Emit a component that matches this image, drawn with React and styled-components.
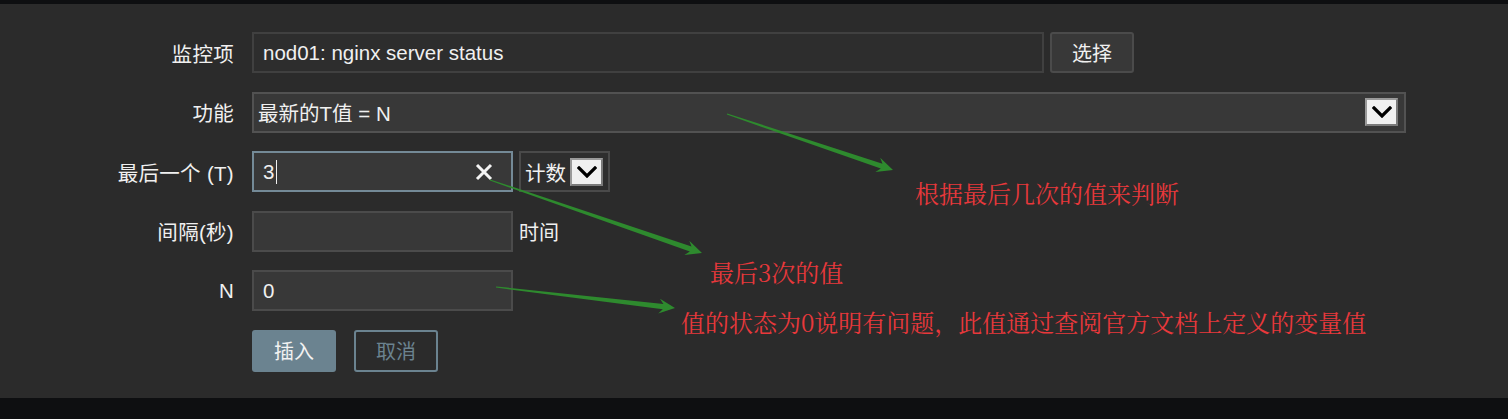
import React from "react";
import styled, { createGlobalStyle } from "styled-components";

const GlobalStyle = createGlobalStyle`
  html, body {
    margin: 0;
    padding: 0;
    background: #0e0f11;
  }
  body {
    font-family: "Liberation Sans", "Noto Sans CJK SC", sans-serif;
  }
`;

const ui = {
  panel: "#2b2b2b",
  field: "#383838",
  border: "#4b4b4b",
  text: "#f0f0f0",
  accent: "#6b8390",
  focus: "#748a97",
  note: "#e8383b",
  arrow: "#2e8a2e",
};

// simple annotation arrows: tail -> tip, tapering shaft
const arrowPoints = ([x1, y1], [x2, y2]) => {
  const dx = x2 - x1;
  const dy = y2 - y1;
  const len = Math.hypot(dx, dy);
  const ux = dx / len;
  const uy = dy / len;
  const nx = -uy;
  const ny = ux;
  const neck = 12;
  const back = 16;
  const p = (d, w) => `${(x2 - ux * d + nx * w).toFixed(1)},${(y2 - uy * d + ny * w).toFixed(1)}`;
  const tail = (w) => `${(x1 + nx * w).toFixed(1)},${(y1 + ny * w).toFixed(1)}`;
  return [tail(0.6), p(neck, 2.6), p(back, 7.5), `${x2},${y2}`, p(back, -7.5), p(neck, -2.6), tail(-0.6)].join(" ");
};

const arrows = [
  [[727, 114], [893, 170]],
  [[490, 180], [702, 253]],
  [[496, 287], [675, 308]],
];

const notes = [
  { x: 915, y: 181, text: "根据最后几次的值来判断" },
  { x: 710, y: 260, text: "最后3次的值" },
  { x: 681, y: 310, text: "值的状态为0说明有问题，此值通过查阅官方文档上定义的变量值" },
];

const App = () => {
  return (
    <>
      <GlobalStyle />
      <Page>
        <Panel>
          <Form>
            <Label>监控项</Label>
            <Line>
              <Field width="792px" readOnly>nod01: nginx server status</Field>
              <Button>选择</Button>
            </Line>

            <Label>功能</Label>
            <Line>
              <Select width="1154px">
                <SelectText>最新的T值 = N</SelectText>
                <DropButton><Chevron /></DropButton>
              </Select>
            </Line>

            <Label>最后一个 (T)</Label>
            <Line>
              <Field width="261px" focused>
                3<Caret />
                <Clear>
                  <svg width="18" height="18" viewBox="0 0 18 18">
                    <path d="M2 2 L16 16 M16 2 L2 16" stroke="#f4f4f4" strokeWidth="3" fill="none" />
                  </svg>
                </Clear>
              </Field>
              <SmallSelect>
                <SelectText>计数</SelectText>
                <DropButton><Chevron /></DropButton>
              </SmallSelect>
            </Line>

            <Label>间隔(秒)</Label>
            <Line>
              <Field width="261px" />
              <Suffix>时间</Suffix>
            </Line>

            <Label>N</Label>
            <Line>
              <Field width="261px">0</Field>
            </Line>

            <span />
            <Actions>
              <Primary>插入</Primary>
              <Secondary>取消</Secondary>
            </Actions>
          </Form>
        </Panel>

        <Overlay width="1508" height="419" viewBox="0 0 1508 419">
          {arrows.map(([a, b], i) => (
            <polygon key={i} points={arrowPoints(a, b)} fill={ui.arrow} />
          ))}
        </Overlay>
        {notes.map((n) => (
          <Note key={n.text} style={{ left: n.x, top: n.y }}>
            {n.text}
          </Note>
        ))}
      </Page>
    </>
  );
};

const Chevron = () => (
  <svg width="20" height="12" viewBox="0 0 20 12">
    <path d="M2 2 L10 10 L18 2" fill="none" stroke="#000" strokeWidth="3.2" strokeLinecap="square" />
  </svg>
);

export default App;

const Page = styled.div`
  position: relative;
  width: 1508px;
  height: 419px;
  padding-top: 4px;
  box-sizing: border-box;
  background: #0e0f11;
  overflow: hidden;
`;

const Panel = styled.div`
  height: 394px;
  background: ${ui.panel};
  padding-top: 28px;
  box-sizing: border-box;
`;

const Form = styled.div`
  display: grid;
  grid-template-columns: 234px 1fr;
  column-gap: 18px;
  row-gap: 18.5px;
  align-items: center;
  color: ${ui.text};
  font-size: 20px;
`;

const Label = styled.div`
  text-align: right;
  font-size: 20.5px;
  letter-spacing: 0.3px;
  white-space: nowrap;
`;

const Line = styled.div`
  display: flex;
  align-items: center;
  gap: 6px;
  height: 41px;
`;

const Field = styled.div`
  position: relative;
  display: flex;
  align-items: center;
  flex-shrink: 0;
  box-sizing: border-box;
  width: ${({ width }) => width};
  height: 41px;
  padding: 0 9px;
  background: ${({ readOnly }) => (readOnly ? "#2d2d2d" : ui.field)};
  border: 2px solid ${({ focused, readOnly }) => (focused ? ui.focus : readOnly ? "#404040" : ui.border)};
  font-size: 20.5px;
  color: ${ui.text};
`;

const Caret = styled.span`
  display: inline-block;
  width: 1px;
  height: 24px;
  margin-left: 2px;
  background: ${ui.text};
`;

const Clear = styled.span`
  position: absolute;
  right: 18px;
  top: 50%;
  transform: translateY(-50%);
  display: flex;
`;

const Button = styled.div`
  display: flex;
  align-items: center;
  justify-content: center;
  box-sizing: border-box;
  width: 84px;
  height: 41px;
  background: ${ui.field};
  border: 2px solid ${ui.border};
  border-radius: 3px;
  font-size: 20px;
`;

const Select = styled.div`
  display: flex;
  align-items: center;
  justify-content: space-between;
  box-sizing: border-box;
  width: ${({ width }) => width};
  height: 41px;
  padding: 0 6px 0 4px;
  background: ${ui.field};
  border: 2px solid #525252;
`;

const SelectText = styled.span`
  font-size: 20.5px;
  white-space: nowrap;
`;

const SmallSelect = styled.div`
  display: flex;
  align-items: center;
  justify-content: space-between;
  flex-shrink: 0;
  box-sizing: border-box;
  width: 91px;
  height: 41px;
  padding: 0 5px 0 4px;
  background: #2e2e2e;
  border: 2px solid #4a4a4a;
`;

const DropButton = styled.div`
  display: flex;
  align-items: center;
  justify-content: center;
  flex-shrink: 0;
  box-sizing: border-box;
  width: 33px;
  height: 28px;
  background: #f0f0f0;
  border: 2px solid #7a7a7a;
  border-top-color: #9a9a9a;
  border-left-color: #9a9a9a;
`;

const Suffix = styled.span`
  font-size: 20px;
`;

const Actions = styled.div`
  display: flex;
  gap: 18px;
  height: 41px;
`;

const Primary = styled.div`
  display: flex;
  align-items: center;
  justify-content: center;
  box-sizing: border-box;
  width: 84px;
  height: 42px;
  background: ${ui.accent};
  border-radius: 3px;
  color: #f2f2f2;
  font-size: 20px;
`;

const Secondary = styled(Primary)`
  background: transparent;
  border: 2px solid ${ui.accent};
  color: ${ui.accent};
`;

const Overlay = styled.svg`
  position: absolute;
  left: 0;
  top: 0;
  pointer-events: none;
`;

const Note = styled.span`
  position: absolute;
  font-family: "Noto Serif CJK SC", "Noto Sans CJK SC", serif;
  font-size: 24px;
  line-height: 24px;
  color: ${ui.note};
  white-space: nowrap;
`;
